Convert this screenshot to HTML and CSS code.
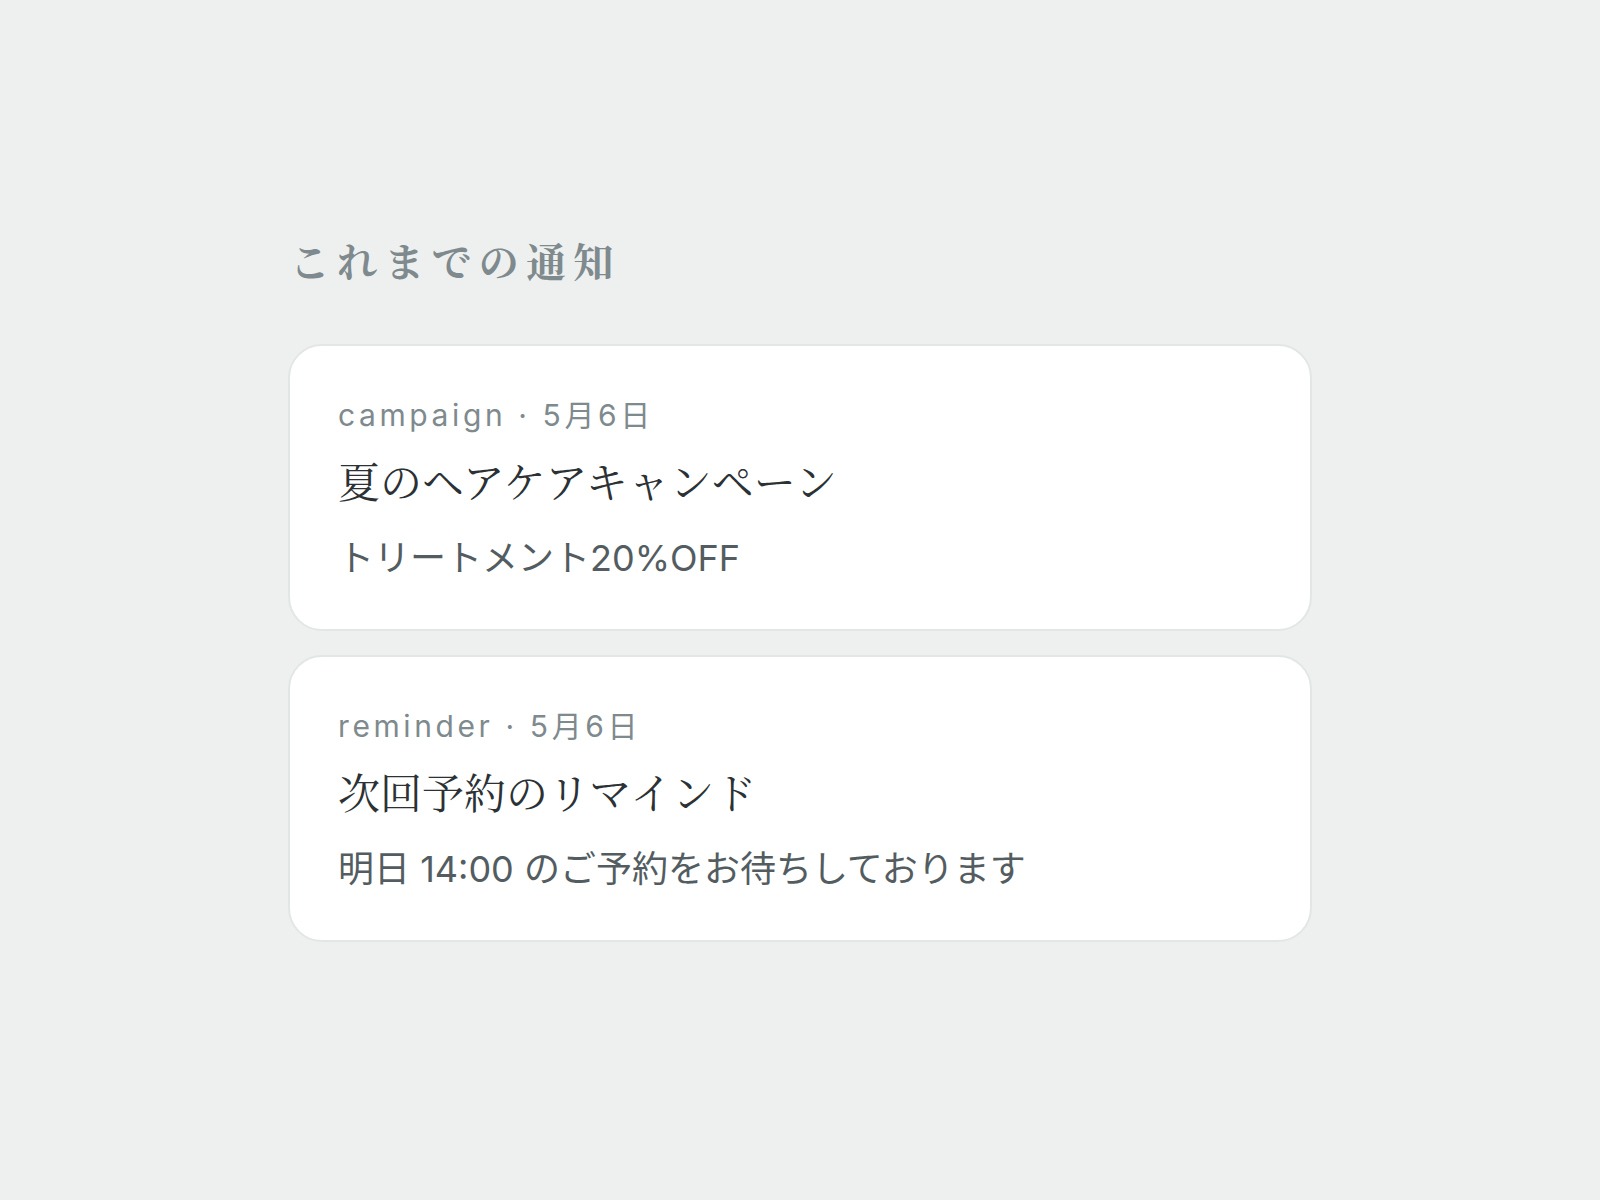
FILE: index.html
```html
<!DOCTYPE html>
<html lang="ja">
<head>
    <meta charset="UTF-8">
    <meta name="viewport" content="width=device-width, initial-scale=1.0">
    <title>これまでの通知</title>
    <link rel="stylesheet" href="styles.css">
</head>
<body>
    <div class="container">
        <h2 class="section-title">これまでの通知</h2>

        <div class="notice-list">
            <div class="card">
                <div class="meta">campaign · 5月6日</div>
                <h3 class="notice-title">夏のヘアケアキャンペーン</h3>
                <p class="notice-body">トリートメント20%OFF</p>
            </div>

            <div class="card">
                <div class="meta">reminder · 5月6日</div>
                <h3 class="notice-title">次回予約のリマインド</h3>
                <p class="notice-body">明日 14:00 のご予約をお待ちしております</p>
            </div>
        </div>
    </div>
</body>
</html>
```

FILE: styles.css
```css
:root {
    --background-color: #EEF0EF;
    --card-background: #FFFFFF;
    --card-border: #E2E6E5;
    --text-primary: #2B3134;
    --text-body: #535D61;
    --text-muted: #7E8A8D;
    --border-radius: 34px;
}

* {
    margin: 0;
    padding: 0;
    box-sizing: border-box;
    -webkit-font-smoothing: antialiased;
}

body {
    font-family: Inter, "Noto Sans CJK JP", sans-serif;
    line-height: 1.5;
    color: var(--text-primary);
    background-color: var(--background-color);
}

.container {
    max-width: 1024px;
    margin: 0 auto;
    padding-top: 232px;
}

.section-title {
    font-family: "Noto Serif CJK JP", "Noto Serif JP", serif;
    font-size: 40px;
    font-weight: 700;
    line-height: 1.4;
    letter-spacing: 0.18em;
    color: var(--text-muted);
    padding-left: 2px;
    margin-bottom: 56px;
}

.notice-list {
    display: flex;
    flex-direction: column;
    gap: 24px;
}

.card {
    background: var(--card-background);
    border: 2px solid var(--card-border);
    border-radius: var(--border-radius);
    padding: 47px 48px 46px;
}

.meta {
    font-size: 30px;
    letter-spacing: 0.12em;
    color: var(--text-muted);
    margin-bottom: 13px;
}

.notice-title {
    font-family: "Noto Serif CJK JP", "Noto Serif JP", serif;
    font-size: 42px;
    font-weight: 400;
    line-height: 1.4;
    color: var(--text-primary);
    margin-bottom: 23px;
}

.notice-body {
    font-size: 36px;
    font-weight: 400;
    line-height: 1.4;
    color: var(--text-body);
}
```
